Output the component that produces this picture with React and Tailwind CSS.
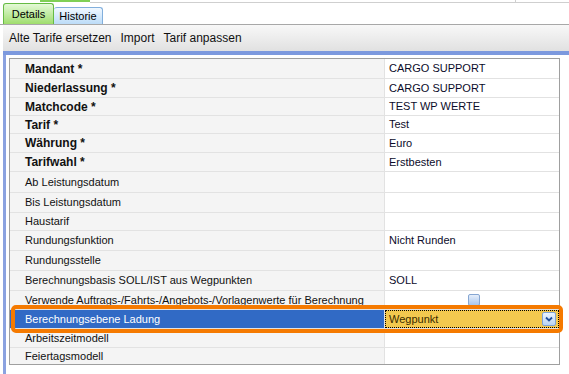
import React from 'react';

const rows = [
  { label: 'Mandant *', value: 'CARGO SUPPORT', bold: true, h: 'h-[20px]' },
  { label: 'Niederlassung *', value: 'CARGO SUPPORT', bold: true, h: 'h-[19px]' },
  { label: 'Matchcode *', value: 'TEST WP WERTE', bold: true, h: 'h-[18px]' },
  { label: 'Tarif *', value: 'Test', bold: true, h: 'h-[18px]' },
  { label: 'Währung *', value: 'Euro', bold: true, h: 'h-[19px]' },
  { label: 'Tarifwahl *', value: 'Erstbesten', bold: true, h: 'h-[19px]' },
  { label: 'Ab Leistungsdatum', value: '', h: 'h-[21px]' },
  { label: 'Bis Leistungsdatum', value: '', h: 'h-[20px]' },
  { label: 'Haustarif', value: '', h: 'h-[18px]' },
  { label: 'Rundungsfunktion', value: 'Nicht Runden', h: 'h-[20px]' },
  { label: 'Rundungsstelle', value: '', h: 'h-[20px]' },
  { label: 'Berechnungsbasis SOLL/IST aus Wegpunkten', value: 'SOLL', h: 'h-[20px]' },
  { label: 'Verwende Auftrags-/Fahrts-/Angebots-/Vorlagenwerte für Berechnung', check: true, h: 'h-[19px]' },
  { label: 'Berechnungsebene Ladung', value: 'Wegpunkt', selected: true, h: 'h-[19px]' },
  { label: 'Arbeitszeitmodell', value: '', h: 'h-[19px]' },
  { label: 'Feiertagsmodell', value: '', h: 'h-[16px]', last: true },
];

function Row({ row }) {
  if (row.selected) {
    return (
      <div className={`flex ${row.h} border-b border-[#e2e2e2]`}>
        <div className="w-[375px] shrink-0 bg-[#316ac5] text-white text-[11px] pl-[15px] flex items-center border-r border-[#e2e2e2]">
          {row.label}
        </div>
        <div className="flex-1 bg-[#f3c94f] border border-dotted border-black flex items-center pl-[3px] pr-[2px] text-[11px] text-[#3a2c00]">
          <span className="flex-1">{row.value}</span>
          <span className="w-[14px] h-[14px] rounded-[2px] border border-[#7fa3d6] bg-gradient-to-b from-[#eaf3fe] to-[#b9d4f3] flex items-center justify-center">
            <svg width="8" height="6" viewBox="0 0 8 6">
              <path d="M1 1.5 L4 4.5 L7 1.5" fill="none" stroke="#1f4e9c" strokeWidth="1.8" />
            </svg>
          </span>
        </div>
      </div>
    );
  }
  return (
    <div className={`flex ${row.h} ${row.last ? '' : 'border-b border-[#e2e2e2]'}`}>
      <div
        className={`w-[375px] shrink-0 bg-[#f4f4f4] text-[#111] pl-[15px] flex items-center border-r border-[#e2e2e2] ${
          row.bold ? 'font-bold text-[12px]' : 'text-[11px]'
        }`}
      >
        {row.label}
      </div>
      <div className="flex-1 bg-white flex items-center pl-[4px] text-[11px] text-[#0b0b2a]">
        {row.check ? (
          <span className="mx-auto w-[12px] h-[12px] rounded-[2px] border border-[#86a6d2] bg-gradient-to-b from-[#e6eefa] to-[#a9c6ec]" />
        ) : (
          row.value
        )}
      </div>
    </div>
  );
}

export default function App() {
  return (
    <div className="w-[569px] h-[374px] bg-white relative overflow-hidden font-['Liberation_Sans',Arial,sans-serif]">
      {/* parent tab strip remnants */}
      <div className="absolute top-0 left-[40px] w-[50px] h-[2px] bg-[#7fcf55]" />
      <div className="absolute top-[2px] left-[90px] right-0 h-px bg-[#cfcfcf]" />
      <div className="absolute top-0 left-[515px] w-px h-[3px] bg-[#cfcfcf]" />

      {/* Tabs */}
      <div className="h-[25px] flex items-end pl-[3px] border-b border-[#a8a8a8]">
        <div className="h-[21px] w-[51px] rounded-t-[3px] border border-b-0 border-[#66bb44] bg-gradient-to-b from-[#e4f9d6] to-[#9fdd6c] text-[11px] text-black flex items-center justify-center">
          Details
        </div>
        <div className="h-[17px] w-[49px] rounded-t-[3px] border border-b-0 border-l-0 border-[#82afdc] bg-gradient-to-b from-[#f1f8ff] to-[#bcdcf8] text-[11px] text-black flex items-center justify-center">
          Historie
        </div>
      </div>

      {/* Toolbar */}
      <div className="ml-[3px] h-[26px] bg-gradient-to-b from-[#f8f8f8] to-[#e1e1e1] flex items-center gap-[9px] pl-[6px] text-[12px] text-[#111]">
        <span>Alte Tarife ersetzen</span>
        <span>Import</span>
        <span>Tarif anpassen</span>
      </div>

      {/* Blue bar */}
      <div className="ml-[3px] h-[4px] bg-[#7c99de]" />

      {/* Body */}
      <div className="ml-[3px] h-[319px] border-l-[3px] border-[#8ba2e0] pl-[3px] pt-[3px]">
        <div className="w-[551px] border border-[#9f9f9f] bg-white">
          {rows.map((r) => (
            <Row key={r.label} row={r} />
          ))}
        </div>
      </div>

      {/* Orange highlight annotation */}
      <div className="absolute left-[11px] top-[305px] w-[552px] h-[28px] border-4 border-[#f57a00] rounded-[5px]" />
    </div>
  );
}
